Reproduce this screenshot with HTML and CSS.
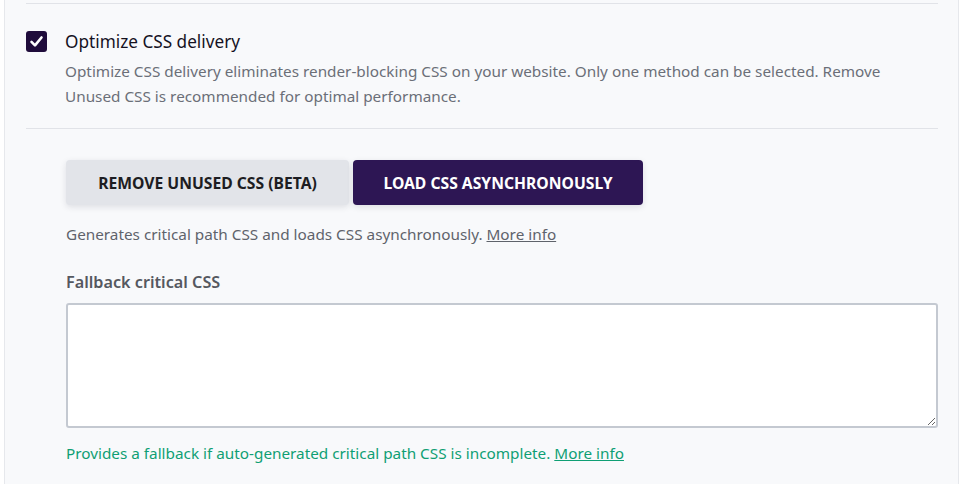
FILE: index.html
```html
<!DOCTYPE html>
<html>
<head>
<meta charset="utf-8">
<link rel="stylesheet" href="styles.css">
</head>
<body>
<div class="panel">
  <div class="sep top-sep"></div>
  <div class="option">
    <div class="check">
      <svg width="21" height="21" viewBox="0 0 21 21"><path d="M5.5 10.8 L9 14.3 L15.5 6.5" fill="none" stroke="#fff" stroke-width="2.6" stroke-linecap="round" stroke-linejoin="round"/></svg>
    </div>
    <div class="option-body">
      <div class="option-title">Optimize CSS delivery</div>
      <p class="option-desc">Optimize CSS delivery eliminates render-blocking CSS on your website. Only one method can be selected. Remove Unused CSS is recommended for optimal performance.</p>
    </div>
  </div>
  <div class="sep"></div>
  <div class="sub">
    <div class="tabs">
      <button class="tab">REMOVE UNUSED CSS (BETA)</button>
      <button class="tab active">LOAD CSS ASYNCHRONOUSLY</button>
    </div>
    <p class="helper">Generates critical path CSS and loads CSS asynchronously. <a href="#">More info</a></p>
    <label class="field-label">Fallback critical CSS</label>
    <textarea class="field"></textarea>
    <p class="hint">Provides a fallback if auto-generated critical path CSS is incomplete. <a href="#">More info</a></p>
  </div>
</div>
</body>
</html>
```
FILE: styles.css
```css
html, body {
  margin: 0;
  padding: 0;
  background: #ffffff;
  font-family: "Noto Sans", "Open Sans", sans-serif;
}
.panel {
  margin-left: 4px;
  width: 955px;
  height: 484px;
  box-sizing: border-box;
  background: #f8f9fb;
  border-left: 1px solid #e6e8ec;
  border-right: 1px solid #e6e8ec;
  padding: 3px 20px 0 21px;
}
.sep {
  height: 1px;
  background: #e1e3e8;
}
.option {
  display: flex;
  gap: 18px;
  padding: 27px 0 19px 0;
}
.check {
  width: 21px;
  height: 21px;
  flex: none;
  border-radius: 3px;
  background: #1f0c3b;
}
.check svg { display: block; }
.option-title {
  font-size: 17.2px;
  line-height: 24px;
  color: #15121f;
  margin-top: -1px;
}
.option-desc {
  margin: 5px 0 0 0;
  max-width: 840px;
  font-size: 15.3px;
  line-height: 25px;
  color: #6b6f78;
}
.sub {
  padding: 31px 0 0 40px;
}
.tabs {
  display: flex;
  gap: 4px;
}
.tab {
  height: 45px;
  border: none;
  border-radius: 4px;
  font-family: inherit;
  font-size: 15.7px;
  font-weight: 700;
  color: #1d1d22;
  background: #e2e4e9;
  box-shadow: 0 2px 6px rgba(30, 30, 60, 0.12);
  width: 283px;
  padding: 0;
}
.tab.active {
  background: #2d1654;
  color: #ffffff;
  width: 290px;
}
.helper {
  margin: 17px 0 0 0;
  font-size: 15.3px;
  line-height: 24px;
  color: #5f636b;
}
.helper a, .hint a {
  color: inherit;
}
.field-label {
  display: block;
  margin-top: 24px;
  font-size: 16.2px;
  font-weight: 600;
  line-height: 24px;
  color: #55585f;
}
.field {
  display: block;
  margin-top: 9px;
  width: 100%;
  height: 125px;
  box-sizing: border-box;
  border: 2px solid #c4c9d1;
  border-radius: 3px;
  background: #fff;
  resize: vertical;
}
.hint {
  margin: 13px 0 0 0;
  font-size: 15.3px;
  line-height: 24px;
  color: #0f9f74;
}
```
